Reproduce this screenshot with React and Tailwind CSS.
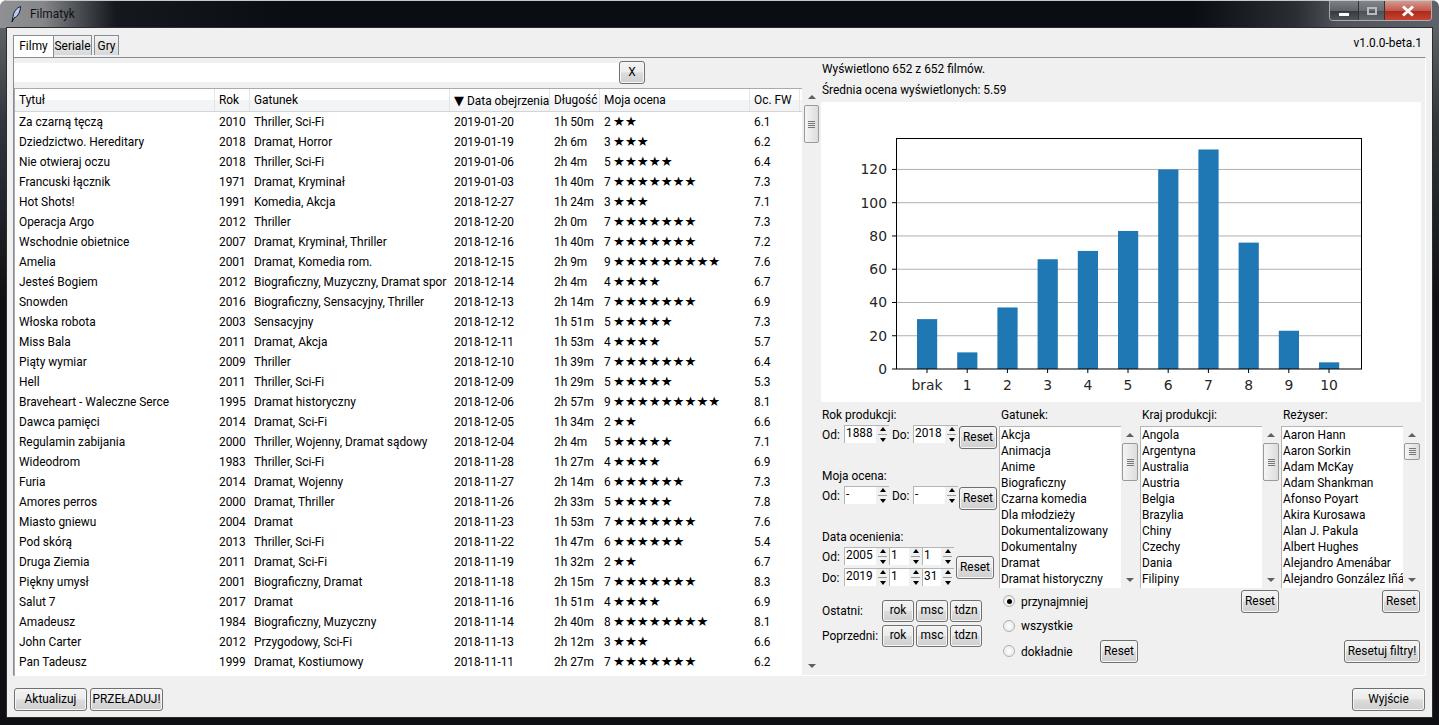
const movies = [
    ["Za czarną tęczą", "2010", "Thriller, Sci-Fi", "2019-01-20", "1h 50m", 2, "6.1"],
    ["Dziedzictwo. Hereditary", "2018", "Dramat, Horror", "2019-01-19", "2h 6m", 3, "6.2"],
    ["Nie otwieraj oczu", "2018", "Thriller, Sci-Fi", "2019-01-06", "2h 4m", 5, "6.4"],
    ["Francuski łącznik", "1971", "Dramat, Kryminał", "2019-01-03", "1h 40m", 7, "7.3"],
    ["Hot Shots!", "1991", "Komedia, Akcja", "2018-12-27", "1h 24m", 3, "7.1"],
    ["Operacja Argo", "2012", "Thriller", "2018-12-20", "2h 0m", 7, "7.3"],
    ["Wschodnie obietnice", "2007", "Dramat, Kryminał, Thriller", "2018-12-16", "1h 40m", 7, "7.2"],
    ["Amelia", "2001", "Dramat, Komedia rom.", "2018-12-15", "2h 9m", 9, "7.6"],
    ["Jesteś Bogiem", "2012", "Biograficzny, Muzyczny, Dramat sportowy", "2018-12-14", "2h 4m", 4, "6.7"],
    ["Snowden", "2016", "Biograficzny, Sensacyjny, Thriller", "2018-12-13", "2h 14m", 7, "6.9"],
    ["Włoska robota", "2003", "Sensacyjny", "2018-12-12", "1h 51m", 5, "7.3"],
    ["Miss Bala", "2011", "Dramat, Akcja", "2018-12-11", "1h 53m", 4, "5.7"],
    ["Piąty wymiar", "2009", "Thriller", "2018-12-10", "1h 39m", 7, "6.4"],
    ["Hell", "2011", "Thriller, Sci-Fi", "2018-12-09", "1h 29m", 5, "5.3"],
    ["Braveheart - Waleczne Serce", "1995", "Dramat historyczny", "2018-12-06", "2h 57m", 9, "8.1"],
    ["Dawca pamięci", "2014", "Dramat, Sci-Fi", "2018-12-05", "1h 34m", 2, "6.6"],
    ["Regulamin zabijania", "2000", "Thriller, Wojenny, Dramat sądowy", "2018-12-04", "2h 4m", 5, "7.1"],
    ["Wideodrom", "1983", "Thriller, Sci-Fi", "2018-11-28", "1h 27m", 4, "6.9"],
    ["Furia", "2014", "Dramat, Wojenny", "2018-11-27", "2h 14m", 6, "7.3"],
    ["Amores perros", "2000", "Dramat, Thriller", "2018-11-26", "2h 33m", 5, "7.8"],
    ["Miasto gniewu", "2004", "Dramat", "2018-11-23", "1h 53m", 7, "7.6"],
    ["Pod skórą", "2013", "Thriller, Sci-Fi", "2018-11-22", "1h 47m", 6, "5.4"],
    ["Druga Ziemia", "2011", "Dramat, Sci-Fi", "2018-11-19", "1h 32m", 2, "6.7"],
    ["Piękny umysł", "2001", "Biograficzny, Dramat", "2018-11-18", "2h 15m", 7, "8.3"],
    ["Salut 7", "2017", "Dramat", "2018-11-16", "1h 51m", 4, "6.9"],
    ["Amadeusz", "1984", "Biograficzny, Muzyczny", "2018-11-14", "2h 40m", 8, "8.1"],
    ["John Carter", "2012", "Przygodowy, Sci-Fi", "2018-11-13", "2h 12m", 3, "6.6"],
    ["Pan Tadeusz", "1999", "Dramat, Kostiumowy", "2018-11-11", "2h 27m", 7, "6.2"],
];

const genres = ["Akcja", "Animacja", "Anime", "Biograficzny", "Czarna komedia", "Dla młodzieży", "Dokumentalizowany", "Dokumentalny", "Dramat", "Dramat historyczny"];
const countries = ["Angola", "Argentyna", "Australia", "Austria", "Belgia", "Brazylia", "Chiny", "Czechy", "Dania", "Filipiny"];
const directors = ["Aaron Hann", "Aaron Sorkin", "Adam McKay", "Adam Shankman", "Afonso Poyart", "Akira Kurosawa", "Alan J. Pakula", "Albert Hughes", "Alejandro Amenábar", "Alejandro González Iñárritu"];

const bars = [30, 10, 37, 66, 71, 83, 120, 132, 76, 23, 4];
const barLabels = ["brak", "1", "2", "3", "4", "5", "6", "7", "8", "9", "10"];

const btn =
    "flex items-center justify-center rounded-[3px] border border-[#707070] bg-[linear-gradient(#f4f4f4_0%,#ebebeb_48%,#dcdcdc_52%,#cfcfcf_100%)] shadow-[inset_0_0_0_1px_#f6f6f6]";

function Button({ className, children }) {
    return <button className={`${btn} ${className}`}>{children}</button>;
}

function Reset({ className = "" }) {
    return <Button className={`h-[23px] w-[38px] ${className}`}>Reset</Button>;
}

function Spin({ value, className }) {
    return (
        <div className={`flex h-[18px] bg-white border-t border-l border-[#b5b5b5] ${className}`}>
            <span className="flex-1 pl-[1px] leading-[15px] overflow-hidden">{value}</span>
            <div className="w-[13px] flex flex-col items-center justify-center gap-[3px] bg-[#f0f0f0]">
                <span className="border-x-[3px] border-b-[4px] border-x-transparent border-b-black" />
                <span className="w-[9px] h-px bg-[#999]" />
                <span className="border-x-[3px] border-t-[4px] border-x-transparent border-t-black" />
            </div>
        </div>
    );
}

function ScrollBar({ thumb, className }) {
    return (
        <div className={`flex flex-col items-center bg-[#f0f0f0] ${className}`}>
            <div className="h-[17px] flex items-center justify-center shrink-0">
                <span className="border-x-[4px] border-b-[4px] border-x-transparent border-b-[#606060]" />
            </div>
            <div
                className="w-full shrink-0 flex flex-col items-center justify-center gap-[1px] rounded-[2px] border border-[#9a9a9a] bg-[linear-gradient(90deg,#f5f5f5,#dcdcdc)]"
                style={{ height: thumb }}
            >
                <span className="w-[7px] h-px bg-[#777]" />
                <span className="w-[7px] h-px bg-[#777]" />
                <span className="w-[7px] h-px bg-[#777]" />
                <span className="w-[7px] h-px bg-[#777]" />
            </div>
            <div className="flex-1" />
            <div className="h-[17px] flex items-center justify-center shrink-0">
                <span className="border-x-[4px] border-t-[4px] border-x-transparent border-t-[#606060]" />
            </div>
        </div>
    );
}

function ListFilter({ title, items, thumb }) {
    return (
        <div className="w-[141px] shrink-0">
            <div className="h-4 leading-4 pl-[2px] mt-[5px] mb-[3px]">{title}</div>
            <div className="flex h-[162px]">
                <div className="w-[122px] bg-white border-t border-l border-[#b5b5b5] overflow-hidden">
                    {items.map((item) => (
                        <div key={item} className="h-4 leading-4 pl-[1px] whitespace-nowrap">
                            {item}
                        </div>
                    ))}
                </div>
                <ScrollBar thumb={thumb} className="w-[16px] ml-[1px]" />
            </div>
        </div>
    );
}

function Radio({ label, checked, className = "" }) {
    return (
        <div className={`flex items-center pl-[4px] ${className}`}>
            <span className="w-[12px] h-[12px] mr-[6px] rounded-full border border-[#b0b0b0] bg-[radial-gradient(#fff,#e4e4e4)] flex items-center justify-center">
                {checked && <span className="w-[5px] h-[5px] rounded-full bg-black" />}
            </span>
            <span className="pt-[2px]">{label}</span>
        </div>
    );
}

function Stars({ count }) {
    return (
        <span className="flex items-center">
            <span className="w-[9px]">{count}</span>
            <span className="font-['DejaVu_Sans',sans-serif] text-[13.3px] leading-[20px]">{"★".repeat(count)}</span>
        </span>
    );
}

function Chart() {
    const y = (v) => 267 - v * 1.663;
    return (
        <svg width="600" height="300" className="block bg-white">
            {[20, 40, 60, 80, 100, 120].map((v) => (
                <line key={v} x1="75" x2="540" y1={y(v)} y2={y(v)} stroke="#b0b0b0" strokeWidth="1" />
            ))}
            {bars.map((v, i) => (
                <rect key={i} x={96 + i * 40.2} y={y(v)} width="20.2" height={v * 1.663} fill="#1f77b4" />
            ))}
            <rect x="75.5" y="36.5" width="465" height="230.5" fill="none" stroke="#000" strokeWidth="1" />
            {[0, 20, 40, 60, 80, 100, 120].map((v) => (
                <g key={v}>
                    <line x1="71" x2="75" y1={y(v)} y2={y(v)} stroke="#000" />
                    <text x="66" y={y(v) + 5} textAnchor="end" fontSize="13.9" fontFamily="DejaVu Sans" fill="#262626">
                        {v}
                    </text>
                </g>
            ))}
            {barLabels.map((label, i) => (
                <g key={label}>
                    <line x1={106 + i * 40.2} x2={106 + i * 40.2} y1="267" y2="271" stroke="#000" />
                    <text x={106 + i * 40.2} y="288" textAnchor="middle" fontSize="13.9" fontFamily="DejaVu Sans" fill="#262626">
                        {label}
                    </text>
                </g>
            ))}
        </svg>
    );
}

function TitleBar() {
    return (
        <div className="h-[28px] flex justify-between shrink-0 rounded-t-[6px] border-t border-[#c8c8c8] bg-[linear-gradient(90deg,#8e9094_0%,#85878a_3%,#55585d_5%,#15181e_8%,#0a0d14_20%,#0a0d14_83%,#2a2d33_90%,#50545a_93%,#5e6268_100%)]">
            <div className="flex items-center h-[27px] pl-[11px]">
                <svg width="11" height="17" viewBox="0 0 11 17">
                    <path d="M9.5 0.5C5.5 2 2.5 6 2 10.5L1 16L3 12C7 10.5 9.5 5.5 9.5 0.5Z" fill="#b9cdf0" stroke="#101a30" strokeWidth="1" />
                </svg>
                <span className="ml-[8px] text-[#111]">Filmatyk</span>
            </div>
            <div className="flex h-[20px] mr-[7px] rounded-b-[4px] border border-t-0 border-[#d0d0d0]/70 overflow-hidden">
                <div className="w-[29px] flex items-end justify-center pb-[4px] bg-[linear-gradient(#7b7f86_0%,#5f636a_50%,#35383f_52%,#50555c_100%)] border-r border-[#333]">
                    <span className="w-[10px] h-[3px] bg-white" />
                </div>
                <div className="w-[26px] flex items-center justify-center bg-[linear-gradient(#80858c_0%,#696d74_50%,#4b4f56_52%,#62666d_100%)] border-r border-[#333]">
                    <span className="w-[10px] h-[8px] border-2 border-[#b8bbc0]" />
                </div>
                <div className="w-[46px] flex items-center justify-center bg-[linear-gradient(#d49a90_0%,#c4594b_50%,#a82a1b_52%,#c8432f_100%)]">
                    <svg width="14" height="12" viewBox="0 0 14 12">
                        <path d="M2 1.5L12 10.5M12 1.5L2 10.5" stroke="#fff" strokeWidth="3" />
                    </svg>
                </div>
            </div>
        </div>
    );
}

export default function App() {
    return (
        <div className="w-[1439px] h-[725px] overflow-hidden flex flex-col rounded-t-[7px] bg-[linear-gradient(#6a6d72_0px,#33363b_120px,#0d0f13_300px)] text-[11.9px] text-black font-['Roboto',sans-serif]">
            <TitleBar />
            <div className="mx-[7px] h-[689px] flex flex-col bg-[#f0f0f0] shrink-0 shadow-[0_0_0_1px_#2a2c30]">
                {/* zakładki */}
                <div className="h-[29px] flex items-end justify-between pl-[6px] pr-[10px]">
                    <div className="flex">
                        <div className="h-[22px] w-[41px] pt-[1px] flex items-center justify-center bg-white border border-b-0 border-[#898c95]">Filmy</div>
                        <div className="h-[20px] w-[39px] pt-[3px] flex items-center justify-center bg-[linear-gradient(#f2f2f2,#d8d8d8)] border border-b-0 border-[#898c95] -ml-px">Seriale</div>
                        <div className="h-[20px] w-[25px] pt-[3px] flex items-center justify-center bg-[linear-gradient(#f2f2f2,#d8d8d8)] border border-b-0 border-[#898c95] ml-[2px]">Gry</div>
                    </div>
                    <span className="self-center mt-[2px]">v1.0.0-beta.1</span>
                </div>

                <div className="mx-[6px] h-[619px] flex border-t border-l border-[#898c95] border-r-white border-b-white border-r border-b">
                    {/* lewa strona */}
                    <div className="w-[807px] shrink-0 flex flex-col">
                        <div className="mt-[3px] h-[23px] flex items-center">
                            <div className="w-[605px] h-[19px] bg-white" />
                            <Button className="w-[26px] h-[23px]">X</Button>
                        </div>
                        <div className="mt-[4px] flex">
                            <div className="w-[788px] h-[588px] bg-white border-t border-l border-[#a8aab0] overflow-hidden">
                                <div className="flex h-[23px] border-b border-[#d5d5d5] bg-[linear-gradient(#fff_0%,#fff_50%,#f3f4f6_51%,#f3f4f6_100%)]">
                                    {[
                                        ["w-[200px]", "Tytuł"],
                                        ["w-[35px]", "Rok"],
                                        ["w-[200px]", "Gatunek"],
                                        ["w-[100px]", "Data obejrzenia"],
                                        ["w-[50px]", "Długość"],
                                        ["w-[150px]", "Moja ocena"],
                                        ["w-[50px]", "Oc. FW"],
                                    ].map(([width, label]) => (
                                        <div key={label} className={`${width} pl-[4px] leading-[23px] border-r border-[#e3e5e8]`}>
                                            <div className="w-full pr-0 whitespace-nowrap overflow-hidden">
                                                {label === "Data obejrzenia" && <span className="font-['DejaVu_Sans',sans-serif] text-[13px] mr-[3px]">▼</span>}
                                                {label}
                                            </div>
                                        </div>
                                    ))}
                                </div>
                                {movies.map((m) => (
                                    <div key={m[0]} className="flex h-[20px] leading-[20px] whitespace-nowrap">
                                        <div className="w-[200px] pl-[4px] overflow-hidden">{m[0]}</div>
                                        <div className="w-[35px] pl-[4px]">{m[1]}</div>
                                        <div className="w-[200px] pl-[4px]">
                                            <div className="w-[193px] overflow-hidden">{m[2]}</div>
                                        </div>
                                        <div className="w-[100px] pl-[4px]">{m[3]}</div>
                                        <div className="w-[50px] pl-[4px]">{m[4]}</div>
                                        <div className="w-[150px] pl-[4px]"><Stars count={m[5]} /></div>
                                        <div className="w-[50px] pl-[4px]">{m[6]}</div>
                                    </div>
                                ))}
                            </div>
                            <ScrollBar thumb={38} className="w-[15px] ml-[2px] h-[586px]" />
                        </div>
                    </div>

                    {/* prawa strona */}
                    <div className="flex-1 flex flex-col">
                        <div className="h-[21px] leading-[21px] pl-[1px] mt-[1px]">Wyświetlono 652 z 652 filmów.</div>
                        <div className="h-[21px] leading-[21px] pl-[1px] mb-[1px]">Średnia ocena wyświetlonych: 5.59</div>
                        <Chart />
                        <div className="flex pl-[1px]">
                            <div className="w-[177px] shrink-0">
                                <div className="h-4 leading-4 mt-[5px]">Rok produkcji:</div>
                                <div className="flex mt-[2px] h-[24px]">
                                    <span className="w-[22px] leading-[20px]">Od:</span>
                                    <Spin value="1888" className="w-[45px]" />
                                    <span className="w-[24px] pl-[3px] leading-[20px]">Do:</span>
                                    <Spin value="2018" className="w-[45px]" />
                                    <Reset className="ml-[1px] mt-[1px]" />
                                </div>
                                <div className="h-4 leading-4 mt-[19px]">Moja ocena:</div>
                                <div className="flex mt-[2px] h-[24px]">
                                    <span className="w-[22px] leading-[20px]">Od:</span>
                                    <Spin value="-" className="w-[45px]" />
                                    <span className="w-[24px] pl-[3px] leading-[20px]">Do:</span>
                                    <Spin value="-" className="w-[45px]" />
                                    <Reset className="ml-[1px] mt-[1px]" />
                                </div>
                                <div className="h-4 leading-4 mt-[19px]">Data ocenienia:</div>
                                <div className="flex items-center mt-[2px]">
                                    <div className="flex flex-col gap-[1px]">
                                        <div className="flex">
                                            <span className="w-[22px] leading-[20px]">Od:</span>
                                            <Spin value="2005" className="w-[45px]" />
                                            <Spin value="1" className="w-[33px]" />
                                            <Spin value="1" className="w-[32px]" />
                                        </div>
                                        <div className="flex">
                                            <span className="w-[22px] leading-[20px]">Do:</span>
                                            <Spin value="2019" className="w-[45px]" />
                                            <Spin value="1" className="w-[33px]" />
                                            <Spin value="31" className="w-[32px]" />
                                        </div>
                                    </div>
                                    <Reset className="ml-[2px]" />
                                </div>
                                <div className="flex items-center mt-[12px]">
                                    <span className="w-[60px] pt-[2px]">Ostatni:</span>
                                    <Button className="w-[32px] h-[22px]">rok</Button>
                                    <Button className="w-[32px] h-[22px] ml-[2px]">msc</Button>
                                    <Button className="w-[32px] h-[22px] ml-[2px]">tdzn</Button>
                                </div>
                                <div className="flex items-center mt-[3px]">
                                    <span className="w-[60px] pt-[2px]">Poprzedni:</span>
                                    <Button className="w-[32px] h-[22px]">rok</Button>
                                    <Button className="w-[32px] h-[22px] ml-[2px]">msc</Button>
                                    <Button className="w-[32px] h-[22px] ml-[2px]">tdzn</Button>
                                </div>
                            </div>
                            <div className="w-[421px] shrink-0">
                                <div className="flex">
                                    <ListFilter title="Gatunek:" items={genres} thumb={38} />
                                    <ListFilter title="Kraj produkcji:" items={countries} thumb={38} />
                                    <ListFilter title="Reżyser:" items={directors} thumb={17} />
                                </div>
                                <div className="flex items-center mt-[2px]">
                                    <Radio label="przynajmniej" checked className="w-[242px]" />
                                    <Reset />
                                    <Reset className="ml-[103px]" />
                                </div>
                                <Radio label="wszystkie" className="mt-[1px] h-[24px]" />
                                <div className="flex items-center mt-[2px]">
                                    <Radio label="dokładnie" className="w-[101px]" />
                                    <Reset />
                                    <Button className="w-[76px] h-[23px] ml-auto">Resetuj filtry!</Button>
                                </div>
                            </div>
                        </div>
                    </div>
                </div>

                {/* dół okna */}
                <div className="flex pt-[12px] px-[7px]">
                    <Button className="w-[73px] h-[23px]">Aktualizuj</Button>
                    <Button className="w-[73px] h-[23px] ml-[3px]">PRZEŁADUJ!</Button>
                    <Button className="w-[73px] h-[23px] ml-auto">Wyjście</Button>
                </div>
            </div>
        </div>
    );
}
